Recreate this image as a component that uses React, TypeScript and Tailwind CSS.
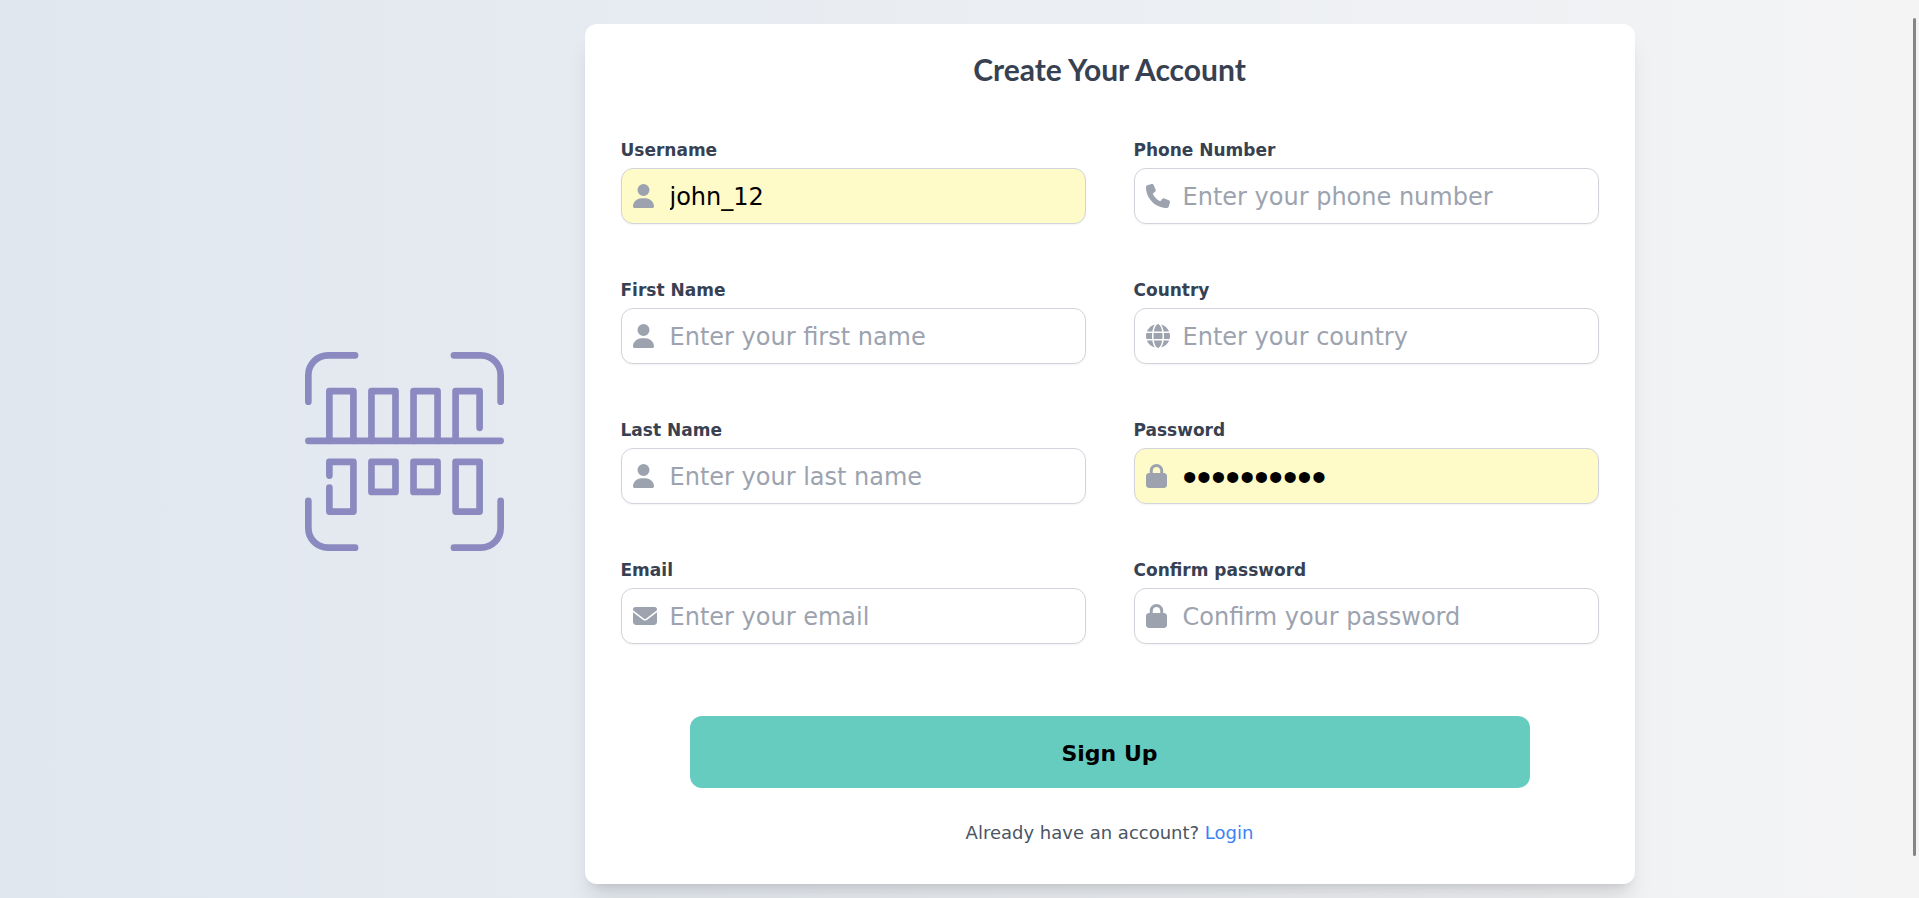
import { useState } from "react";
import type { IconType } from "react-icons";
import { FaEnvelope, FaGlobe, FaLock, FaPhone, FaUser } from "react-icons/fa6";

type Field = {
  id: string;
  label: string;
  placeholder: string;
  type: string;
  icon: IconType;
  narrowIcon?: boolean;
  initial?: string;
};

const fields: Field[] = [
  { id: "username", label: "Username", placeholder: "Enter your username", type: "text", icon: FaUser, narrowIcon: true, initial: "john_12" },
  { id: "phone", label: "Phone Number", placeholder: "Enter your phone number", type: "tel", icon: FaPhone },
  { id: "first-name", label: "First Name", placeholder: "Enter your first name", type: "text", icon: FaUser, narrowIcon: true },
  { id: "country", label: "Country", placeholder: "Enter your country", type: "text", icon: FaGlobe },
  { id: "last-name", label: "Last Name", placeholder: "Enter your last name", type: "text", icon: FaUser, narrowIcon: true },
  { id: "password", label: "Password", placeholder: "Enter your password", type: "password", icon: FaLock, narrowIcon: true, initial: "secret1234" },
  { id: "email", label: "Email", placeholder: "Enter your email", type: "email", icon: FaEnvelope },
  { id: "confirm", label: "Confirm password", placeholder: "Confirm your password", type: "password", icon: FaLock, narrowIcon: true },
];

function BarcodeLogo() {
  return (
    <svg
      viewBox="47 35 596 596"
      className="w-[199px]"
      fill="none"
      stroke="#8a8ac0"
      strokeWidth="20"
      strokeLinecap="round"
      strokeLinejoin="round"
      aria-hidden="true"
    >
      <path d="M57 184V104A59 59 0 0 1 116 45H197" />
      <path d="M493 45H574A59 59 0 0 1 633 104V184" />
      <path d="M57 481V562A59 59 0 0 0 116 621H197" />
      <path d="M493 621H574A59 59 0 0 0 633 562V481" />
      <path d="M57 301H633" />
      <path d="M120 301V152H192V301" />
      <path d="M246 301V152H318V301" />
      <path d="M372 301V152H444V301" />
      <path d="M498 301V152H570V262" />
      <path d="M120 405V364H192V513H120V441" />
      <path d="M246 364H318V454H246Z" />
      <path d="M372 364H444V454H372Z" />
      <path d="M498 364H570V513H498Z" />
    </svg>
  );
}

function FormField({ field }: { field: Field }) {
  const [value, setValue] = useState(field.initial ?? "");
  const Icon = field.icon;
  const masked = field.type === "password" && value !== "";
  return (
    <div>
      <label htmlFor={field.id} className="mb-1 block text-[17px] leading-7 font-bold text-[#374151]">
        {field.label}
      </label>
      <div
        className={`flex h-14 items-center rounded-xl border border-[#d1d5db] pl-[11px] shadow-xs ${
          field.initial ? "bg-[#fffbc8]" : "bg-white"
        }`}
      >
        <span className="flex w-[37px] shrink-0 text-[#9ca3af]">
          <Icon className={field.narrowIcon ? "h-6 w-[21px]" : "size-6"} aria-hidden="true" />
        </span>
        <input
          id={field.id}
          type={field.type}
          value={value}
          placeholder={field.placeholder}
          onChange={(e) => setValue(e.target.value)}
          className={`h-full min-w-0 flex-1 rounded-r-xl bg-transparent pt-0.5 text-black outline-none placeholder:text-[#9ca3af] ${
            masked ? "font-['Liberation_Sans',sans-serif] text-[41px]" : "text-2xl"
          }`}
        />
      </div>
    </div>
  );
}

export default function App() {
  return (
    <div className="min-h-screen bg-linear-to-r from-[#e0e7ef] to-[#f4f4f5] px-6 pt-6 pb-3 font-['DejaVu_Sans',sans-serif]">
      <main className="mx-auto flex max-w-[1350px] items-center gap-[60px]">
        <div className="flex w-60 shrink-0 justify-center pb-1.5">
          <BarcodeLogo />
        </div>
        <section className="flex-1 rounded-xl bg-white px-9 pt-7 pb-[38px] shadow-xl">
          <h1 className="mb-[50px] text-center font-['Lato',sans-serif] text-3xl leading-[34px] font-bold text-[#374151]">
            Create Your Account
          </h1>
          <form onSubmit={(e) => e.preventDefault()}>
            <div className="grid grid-cols-2 gap-x-12 gap-y-[52px]">
              {fields.map((field) => (
                <FormField key={field.id} field={field} />
              ))}
            </div>
            <button
              type="submit"
              className="mx-auto mt-[72px] block h-[72px] w-full max-w-[840px] rounded-xl bg-[#67ccc0] pt-0.5 text-[22px] font-bold text-black"
            >
              Sign Up
            </button>
          </form>
          <p className="mt-8 text-center text-lg leading-[26px] text-[#4b5563]">
            Already have an account?{" "}
            <a href="#login" className="text-[#3b82f6]">
              Login
            </a>
          </p>
        </section>
      </main>
      <div className="fixed top-[18px] right-[3px] bottom-[42px] w-[3px] rounded-full bg-[#858585]" />
    </div>
  );
}
